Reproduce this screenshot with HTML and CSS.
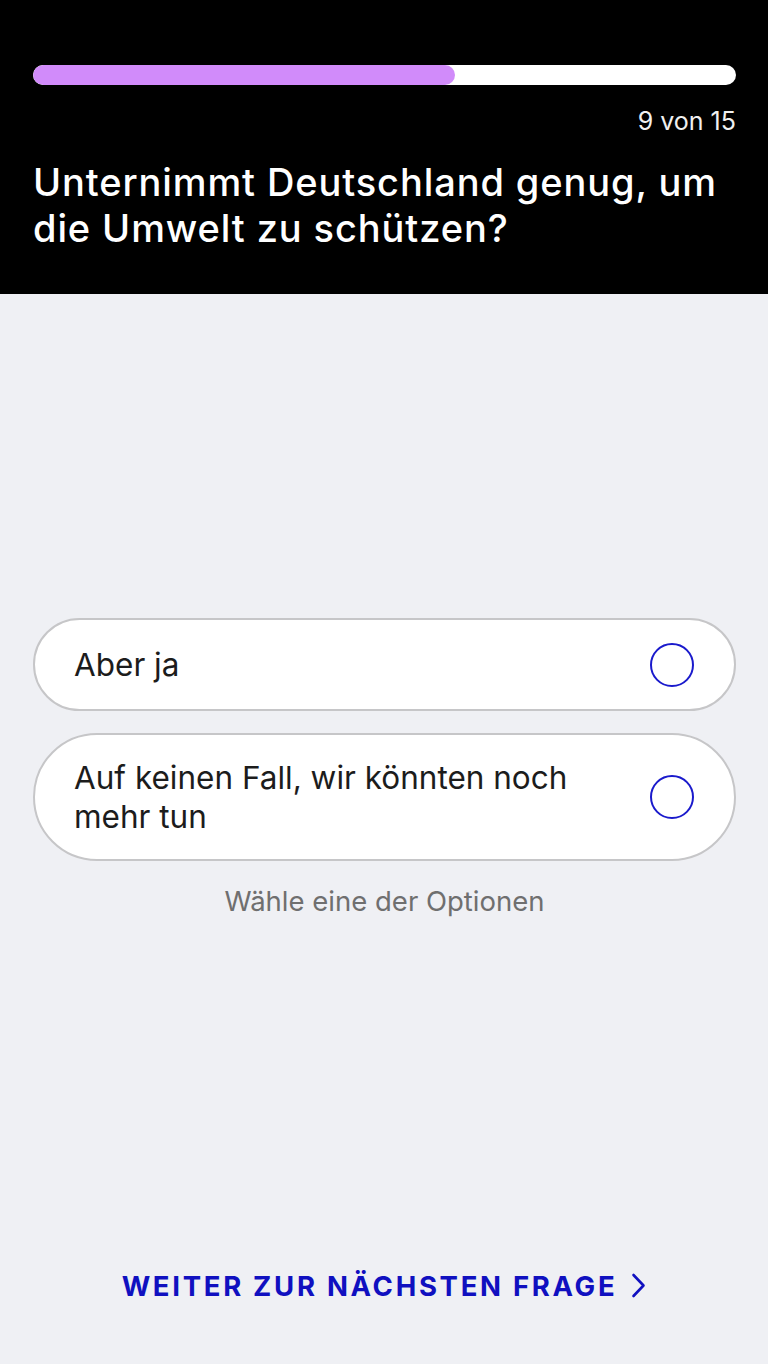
FILE: index.html
```html
<!DOCTYPE html>
<html lang="de">
<head>
<meta charset="utf-8">
<link rel="stylesheet" href="styles.css">
</head>
<body>
<div class="screen">
  <header class="header">
    <div class="progress"><div class="progress-fill" style="width: 60%"></div></div>
    <div class="counter">9 von 15</div>
    <h1 class="question">Unternimmt Deutschland genug, um die Umwelt zu schützen?</h1>
  </header>
  <main class="content">
    <div class="options">
      <div class="option">
        <span class="option-text">Aber ja</span>
        <span class="radio"></span>
      </div>
      <div class="option option-tall">
        <span class="option-text">Auf keinen Fall, wir könnten noch mehr tun</span>
        <span class="radio"></span>
      </div>
      <p class="hint">Wähle eine der Optionen</p>
    </div>
  </main>
  <footer class="footer">
    <span class="next">WEITER ZUR NÄCHSTEN FRAGE</span>
    <svg class="chevron" width="15" height="25" viewBox="0 0 15 25"><path d="M2.5 2 L12.5 12.5 L2.5 23" fill="none" stroke="#1010c0" stroke-width="2.6" stroke-linecap="round" stroke-linejoin="round"/></svg>
  </footer>
</div>
</body>
</html>
```

FILE: styles.css
```css
html, body {
  margin: 0;
  padding: 0;
}
body {
  background: #eff0f4;
  font-family: Inter, "Liberation Sans", sans-serif;
}
.screen {
  width: 768px;
  height: 1364px;
  display: flex;
  flex-direction: column;
}
.header {
  background: #000;
  padding: 65px 32px 0 33px;
  height: 294px;
  box-sizing: border-box;
  color: #fff;
}
.progress {
  height: 20px;
  background: #fff;
  border-radius: 10px;
  overflow: hidden;
}
.progress-fill {
  height: 100%;
  background: #d18bfa;
  border-radius: 10px;
}
.counter {
  text-align: right;
  font-size: 25px;
  margin-top: 20px;
  line-height: 32px;
  color: #f0f0f0;
}
.question {
  margin: 22px 0 0;
  font-size: 38px;
  font-weight: 500;
  line-height: 46px;
  letter-spacing: 0.9px;
}
.content {
  flex: 1;
  display: flex;
  flex-direction: column;
  justify-content: center;
  padding: 0 32px 0 33px;
}
.options {
  display: flex;
  flex-direction: column;
  gap: 22px;
  margin-top: 13px;
}
.option {
  background: #fff;
  border: 2px solid #c6c6c8;
  border-radius: 64px;
  min-height: 93px;
  box-sizing: border-box;
  display: flex;
  align-items: center;
  justify-content: space-between;
  padding: 10px 40px 10px 39px;
}
.option-tall {
  min-height: 128px;
}
.option-text {
  font-size: 31.5px;
  line-height: 39px;
  color: #1c1c1c;
  max-width: 520px;
}
.radio {
  width: 40px;
  height: 40px;
  border: 2px solid #1a1acc;
  border-radius: 50%;
  flex-shrink: 0;
}
.hint {
  margin: 0;
  text-align: center;
  font-size: 27.5px;
  line-height: 36px;
  color: #6f6f6f;
}
.footer {
  height: 134px;
  display: flex;
  align-items: flex-start;
  justify-content: center;
  gap: 14px;
  padding-top: 39px;
  box-sizing: border-box;
}
.next {
  font-size: 27.5px;
  font-weight: 700;
  letter-spacing: 2.7px;
  color: #1010c0;
}
.chevron {
  margin-top: 4px;
}
```
